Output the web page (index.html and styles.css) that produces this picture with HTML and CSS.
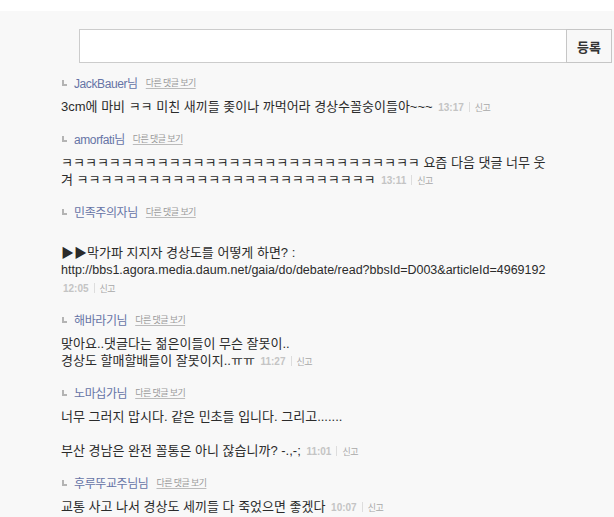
FILE: index.html
```html
<!DOCTYPE html>
<html lang="ko">
<head>
<meta charset="utf-8">
<title>댓글</title>
<link rel="stylesheet" href="styles.css">
</head>
<body>
<div class="top"></div>
<div class="panel">
  <form class="write">
    <input class="write-input" type="text">
    <button class="write-btn" type="button">등록</button>
  </form>
  <ul class="replies">
    <li class="reply">
      <div class="reply-head"><span class="mark"></span><a class="name">JackBauer님</a><a class="more">다른 댓글 보기</a></div>
      <p class="reply-text">3cm에 마비 ㅋㅋ 미친 새끼들 좆이나 까먹어라 경상수꼴숭이들아~~~ <span class="meta"><span class="time">13:17</span><span class="sep"></span><a class="report">신고</a></span></p>
    </li>
    <li class="reply">
      <div class="reply-head"><span class="mark"></span><a class="name">amorfati님</a><a class="more">다른 댓글 보기</a></div>
      <p class="reply-text">ㅋㅋㅋㅋㅋㅋㅋㅋㅋㅋㅋㅋㅋㅋㅋㅋㅋㅋㅋㅋㅋㅋㅋㅋㅋㅋㅋㅋㅋㅋ 요즘 다음 댓글 너무 웃겨 ㅋㅋㅋㅋㅋㅋㅋㅋㅋㅋㅋㅋㅋㅋㅋㅋㅋㅋㅋㅋㅋㅋㅋㅋㅋ <span class="meta"><span class="time">13:11</span><span class="sep"></span><a class="report">신고</a></span></p>
    </li>
    <li class="reply">
      <div class="reply-head"><span class="mark"></span><a class="name">민족주의자님</a><a class="more">다른 댓글 보기</a></div>
      <p class="reply-text"><br>▶▶막가파 지지자 경상도를 어떻게 하면? : <span class="url">http://bbs1.agora.media.daum.net/gaia/do/debate/read?bbsId=D003&amp;articleId=4969192</span> <span class="meta"><span class="time">12:05</span><span class="sep"></span><a class="report">신고</a></span></p>
    </li>
    <li class="reply">
      <div class="reply-head"><span class="mark"></span><a class="name">해바라기님</a><a class="more">다른 댓글 보기</a></div>
      <p class="reply-text">맞아요..댓글다는 젊은이들이 무슨 잘못이..<br>경상도 할매할배들이 잘못이지..ㅠㅠ <span class="meta"><span class="time">11:27</span><span class="sep"></span><a class="report">신고</a></span></p>
    </li>
    <li class="reply">
      <div class="reply-head"><span class="mark"></span><a class="name">노마십가님</a><a class="more">다른 댓글 보기</a></div>
      <p class="reply-text">너무 그러지 맙시다. 같은 민초들 입니다. 그리고.......<br><br>부산 경남은 완전 꼴통은 아니 잖습니까? -.,-; <span class="meta"><span class="time">11:01</span><span class="sep"></span><a class="report">신고</a></span></p>
    </li>
    <li class="reply">
      <div class="reply-head"><span class="mark"></span><a class="name">후루뚜교주님님</a><a class="more">다른 댓글 보기</a></div>
      <p class="reply-text">교통 사고 나서 경상도 세끼들 다 죽었으면 좋겠다 <span class="meta"><span class="time">10:07</span><span class="sep"></span><a class="report">신고</a></span></p>
    </li>
  </ul>
</div>
</body>
</html>
```

FILE: styles.css
```css
html, body {
  margin: 0;
  padding: 0;
  background: #ffffff;
}
body {
  font-family: "Liberation Sans", "Noto Sans CJK KR", sans-serif;
  font-size: 13px;
  color: #333333;
}
.top {
  height: 11px;
  background: #ffffff;
}
.panel {
  background: #f8f8f8;
  min-height: 506px;
  padding: 18px 0 0 61px;
  box-sizing: border-box;
}
.write {
  display: flex;
  margin: 0 0 0 18px;
  width: 533px;
  height: 34px;
}
.write-input {
  flex: 1;
  margin: 0;
  height: 34px;
  box-sizing: border-box;
  border: 1px solid #cccccc;
  border-right: none;
  background: #ffffff;
  outline: none;
  padding: 0 6px;
}
.write-btn {
  width: 46px;
  height: 34px;
  margin: 0;
  padding: 0;
  box-sizing: border-box;
  border: 1px solid #c6c6c6;
  background: #f8f8f8;
  font-family: "Noto Sans CJK KR", sans-serif;
  font-size: 13px;
  font-weight: bold;
  color: #333333;
}
.replies {
  list-style: none;
  margin: 10px 0 0 0;
  padding: 0;
  width: 494px;
}
.reply {
  margin: 0 0 13px 0;
}
.reply-head {
  display: flex;
  align-items: center;
  height: 18px;
  margin-bottom: 7px;
}
.mark {
  width: 5px;
  height: 6px;
  box-sizing: border-box;
  margin: 2px 7px 0 1px;
  border-left: 2px solid #b4b4b4;
  border-bottom: 2px solid #b4b4b4;
}
.name {
  font-family: "Liberation Sans", "Noto Sans CJK KR", sans-serif;
  font-size: 12px;
  color: #6674a6;
  letter-spacing: -0.4px;
}
.more {
  margin-left: 8px;
  font-family: "Noto Sans CJK KR", sans-serif;
  font-size: 9px;
  letter-spacing: -0.6px;
  color: #9a9a9a;
  text-decoration: underline;
  text-decoration-color: #bbbbbb;
  text-underline-offset: 2px;
}
.reply-text {
  margin: 0;
  line-height: 17px;
  color: #2b2b2b;
}
.url {
  font-size: 12.5px;
}
.meta {
  white-space: nowrap;
  margin-left: 2px;
}
.time {
  font-family: "Liberation Sans", sans-serif;
  font-size: 10px;
  font-weight: bold;
  color: #c4c4c4;
}
.sep {
  display: inline-block;
  width: 0;
  height: 10px;
  border-left: 1px solid #dddddd;
  margin: 0 5px;
  vertical-align: -1px;
}
.report {
  font-family: "Noto Sans CJK KR", sans-serif;
  font-size: 9px;
  color: #a8a8a8;
  letter-spacing: -0.5px;
}
```
